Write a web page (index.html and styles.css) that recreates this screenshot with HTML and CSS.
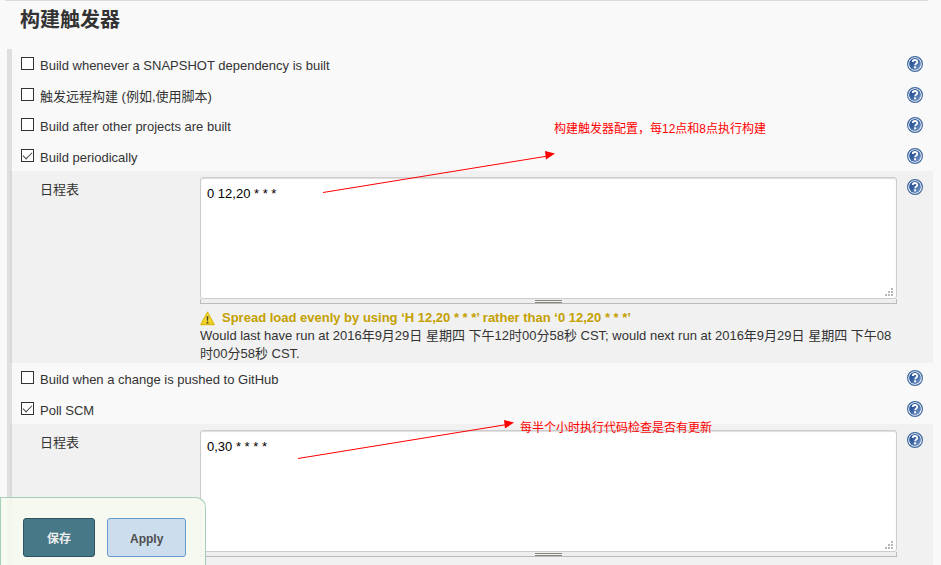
FILE: index.html
```html
<!DOCTYPE html>
<html lang="zh-CN">
<head>
<meta charset="utf-8">
<title>构建触发器</title>
<link rel="stylesheet" href="styles.css">
</head>
<body>
<svg class="defs" aria-hidden="true">
  <defs>
    <linearGradient id="blue" x1="0" y1="0" x2="1" y2="1">
      <stop offset="0" stop-color="#16438c"/>
      <stop offset=".5" stop-color="#3c66a4"/>
      <stop offset="1" stop-color="#86a5d0"/>
    </linearGradient>
    <linearGradient id="yellow" x1="0" y1="0" x2="0" y2="1">
      <stop offset="0" stop-color="#fbe94e"/>
      <stop offset="1" stop-color="#f0cf1d"/>
    </linearGradient>
    <symbol id="help" viewBox="0 0 16 16">
      <circle cx="8" cy="8" r="7.4" fill="#fff" stroke="#3e689f" stroke-width="1.2"/>
      <circle cx="8" cy="8" r="5.9" fill="url(#blue)"/>
      <path d="M5.7 6.1C5.7 3.4 10.3 3.3 10.3 5.9C10.3 7.5 8.1 7.4 8.1 9.2" fill="none" stroke="#fff" stroke-width="1.8"/>
      <rect x="7.1" y="10.3" width="2" height="2" fill="#fff"/>
    </symbol>
    <symbol id="grip" viewBox="0 0 8 8">
      <path d="M6 0h2v2H6zM3 3h2v2H3zM6 3h2v2H6zM0 6h2v2H0zM3 6h2v2H3zM6 6h2v2H6z" fill="#b8b8b8"/>
    </symbol>
  </defs>
</svg>
<main class="page">
  <h1 class="title">构建触发器</h1>
  <form class="triggers" id="config">
    <div class="group">
      <div class="row"><label class="option"><input type="checkbox">Build whenever a SNAPSHOT dependency is built</label><a class="help" href="#" aria-label="Help"><svg><use href="#help"/></svg></a></div>
      <div class="row"><label class="option"><input type="checkbox">触发远程构建 (例如,使用脚本)</label><a class="help" href="#" aria-label="Help"><svg><use href="#help"/></svg></a></div>
      <div class="row"><label class="option"><input type="checkbox">Build after other projects are built</label><a class="help" href="#" aria-label="Help"><svg><use href="#help"/></svg></a></div>
      <div class="row"><label class="option"><input type="checkbox" checked>Build periodically</label><a class="help" href="#" aria-label="Help"><svg><use href="#help"/></svg></a></div>
    </div>
    <div class="schedule">
      <label class="name" for="timer">日程表</label>
      <div class="field">
        <div class="box"><textarea id="timer" spellcheck="false">0 12,20 * * *</textarea><svg class="grip"><use href="#grip"/></svg></div>
        <div class="handle"></div>
        <div class="messages">
          <p class="warning"><svg class="alert" viewBox="0 0 14 14"><path d="M7 1.2L13.2 12.6H.8Z" fill="url(#yellow)" stroke="#dcbb18" stroke-width="1.2" stroke-linejoin="round"/><path d="M6.1 4.8h1.8L7.5 9h-1zM6.2 10h1.6v1.6H6.2z" fill="#4d4727"/></svg>Spread load evenly by using ‘H 12,20 * * *’ rather than ‘0 12,20 * * *’</p>
          <p class="info">Would last have run at 2016年9月29日 星期四 下午12时00分58秒 CST; would next run at 2016年9月29日 星期四 下午08时00分58秒 CST.</p>
        </div>
      </div>
      <a class="help" href="#" aria-label="Help"><svg><use href="#help"/></svg></a>
      <svg class="arrow arrow-timer" viewBox="0 0 234 46"><path d="M1 41.500L226 5" stroke="red" fill="none"/><path d="M223 0L233 2.500L224 8.500Z" fill="red"/></svg>
      <span class="note note-timer">构建触发器配置，每12点和8点执行构建</span>
    </div>
    <div class="group">
      <div class="row"><label class="option"><input type="checkbox">Build when a change is pushed to GitHub</label><a class="help" href="#" aria-label="Help"><svg><use href="#help"/></svg></a></div>
      <div class="row"><label class="option"><input type="checkbox" checked>Poll SCM</label><a class="help" href="#" aria-label="Help"><svg><use href="#help"/></svg></a></div>
    </div>
    <div class="schedule">
      <label class="name" for="scm">日程表</label>
      <div class="field">
        <div class="box"><textarea id="scm" spellcheck="false">0,30 * * * *</textarea><svg class="grip"><use href="#grip"/></svg></div>
        <div class="handle"></div>
        <div class="messages"></div>
      </div>
      <a class="help" href="#" aria-label="Help"><svg><use href="#help"/></svg></a>
      <svg class="arrow arrow-scm" viewBox="0 0 218 40"><path d="M1 38.500L210 4.500" stroke="red" fill="none"/><path d="M207 0L217 2.500L208 8.500Z" fill="red"/></svg>
      <span class="note note-scm">每半个小时执行代码检查是否有更新</span>
    </div>
  </form>
</main>
<div class="actions">
  <button class="save" type="submit" form="config">保存</button>
  <button class="apply" type="button">Apply</button>
</div>
</body>
</html>
```
FILE: styles.css
```css
*,
*::before {
  box-sizing: border-box;
}

body {
  margin: 0;
  overflow: hidden;
  background: #f9f9f9;
  color: #333;
  font: 13px/18px "Liberation Sans", "Noto Sans CJK SC", sans-serif;
}

.defs {
  position: absolute;
  width: 0;
  height: 0;
}

.page {
  padding: 0 8px 0 7px;
}

.title {
  margin: 0 5px 0 -2px;
  padding: 4px 15px 0;
  height: 49px;
  border-top: 1px solid #ddd;
  font-size: 20px;
  line-height: 30px;
}

.triggers {
  border-left: 5px solid #dfdfdf;
}

.row {
  display: flex;
  align-items: center;
  justify-content: space-between;
  height: 30px;
  padding: 0 10px 0 9px;
}

.row:nth-child(even) {
  height: 31px;
}

.option {
  display: flex;
  align-items: center;
  gap: 6px;
  padding-top: 4px;
}

.option input {
  appearance: none;
  width: 13px;
  height: 13px;
  margin: 0 0 5px;
  border: 1px solid #333;
  background: #fff;
}

.option input:checked::before {
  content: "";
  display: block;
  width: 9px;
  height: 5px;
  margin: 2px 1px;
  border: solid #444;
  border-width: 0 0 1px 1px;
  transform: rotate(-45deg);
}

.help,
.help svg {
  display: block;
  width: 16px;
  height: 16px;
}

.schedule {
  position: relative;
  display: grid;
  grid-template-columns: 160px minmax(0, 1fr) 16px;
  column-gap: 10px;
  margin-left: -2px;
  padding: 6px 10px 0 30px;
  background: rgba(0, 0, 0, .03);
}

.schedule .name {
  padding-top: 4px;
}

.schedule .help {
  margin-top: 2px;
}

.field {
  margin-left: -10px;
}

.box {
  position: relative;
}

textarea {
  display: block;
  width: 100%;
  height: 122px;
  padding: 7px 6px 6px;
  border: 1px solid #ccc;
  border-radius: 3px;
  box-shadow: inset 0 1px 1px #ddd;
  background: #fff;
  color: #000;
  font: inherit;
  resize: none;
  outline: none;
}

.grip {
  position: absolute;
  right: 4px;
  bottom: 3px;
  width: 8px;
  height: 8px;
}

.handle {
  display: flex;
  align-items: flex-end;
  justify-content: center;
  height: 5px;
  border: solid #bbb;
  border-width: 0 1px 1px;
  background: #eee;
}

.handle::before {
  content: "";
  width: 27px;
  height: 3px;
  border: solid #888880;
  border-width: 1px 0;
}

.messages {
  min-height: 20px;
  padding-top: 5px;
}

.messages p {
  margin: 0;
}

.warning {
  display: flex;
  align-items: center;
  gap: 7px;
  color: #c4a000;
  font-weight: bold;
}

.alert {
  width: 15px;
  height: 15px;
}

.arrow,
.note {
  position: absolute;
  z-index: 1;
  pointer-events: none;
}

.note {
  color: red;
  font-size: 12px;
  white-space: nowrap;
}

.arrow-timer {
  left: 312px;
  top: -20px;
  width: 234px;
  height: 46px;
}

.note-timer {
  left: 544px;
  top: -51px;
}

.arrow-scm {
  left: 287px;
  top: -4px;
  width: 218px;
  height: 40px;
}

.note-scm {
  left: 510px;
  top: -5px;
}

.actions {
  position: fixed;
  z-index: 2;
  left: 0;
  bottom: 0;
  display: flex;
  gap: 12px;
  padding: 20px 19px 8px 22px;
  border: 1px solid #a5cdb8;
  border-bottom: 0;
  border-top-right-radius: 10px;
  background: rgba(245, 249, 239, .9);
}

.actions button {
  height: 39px;
  padding: 2px 22px 0;
  border-radius: 3px;
  font: bold 12px/18px "Liberation Sans", "Noto Sans CJK SC", sans-serif;
}

.actions .save {
  padding: 2px 23px 0;
  border: 1px solid #2d5363;
  background: #467888;
  color: #eee;
}

.apply {
  border: 1px solid #6699cc;
  background: #ccddee;
  color: #4d4d4d;
}
```
